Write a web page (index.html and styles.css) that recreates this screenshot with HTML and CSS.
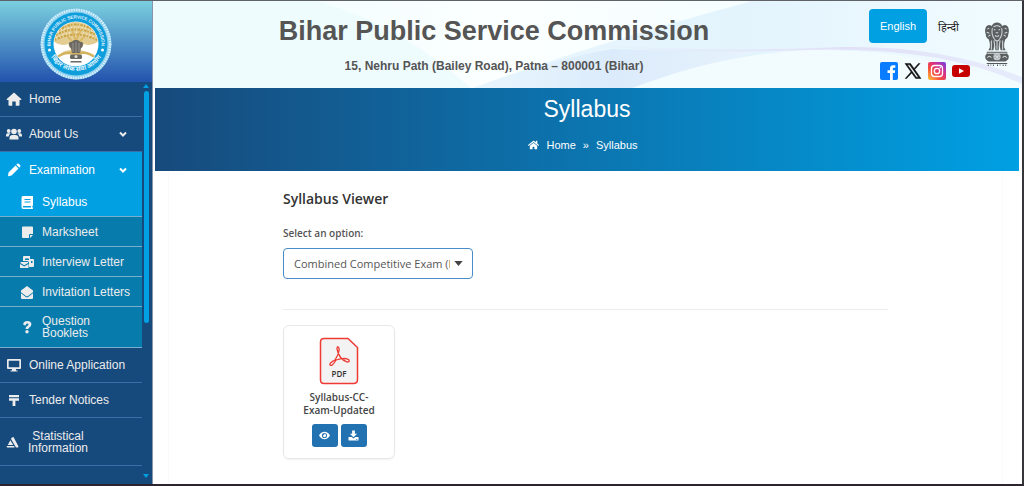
FILE: index.html
```html
<!DOCTYPE html>
<html lang="en">
<head>
    <meta charset="UTF-8">
    <meta name="viewport" content="width=device-width, initial-scale=1.0">
    <title>Syllabus - Bihar Public Service Commission</title>
    <link rel="stylesheet" href="styles.css">
</head>
<body>
    <aside class="sidebar">
        <div class="logo">
            <svg class="seal" viewBox="0 0 144 144" role="img" aria-label="Bihar Public Service Commission">
                <defs>
                    <path id="arcTop" d="M22 82 A51 51 0 1 1 122 82"/>
                    <path id="arcBottom" d="M14 78 A59 59 0 0 0 130 78"/>
                    <clipPath id="disc"><circle cx="72" cy="72" r="44"/></clipPath>
                </defs>
                <circle cx="72" cy="72" r="71" fill="#8fd0ee"/>
                <circle cx="72" cy="72" r="68" fill="none" stroke="#d5effa" stroke-width="5" stroke-dasharray="3 2"/>
                <circle cx="72" cy="72" r="63" fill="#0e9edc"/>
                <circle cx="72" cy="72" r="45" fill="#fff"/>
                <g clip-path="url(#disc)">
                    <path d="M26 20H118V66Q102 78 88 72L80 84Q100 88 112 96L106 92Q88 90 78 94L66 94Q50 90 36 96Q46 84 62 84L56 72Q40 78 26 66Z" fill="#e3cd92"/>
                    <g fill="none" stroke="#c9a343" stroke-width="4" stroke-dasharray="3 3 5 2">
                        <path d="M38 44Q72 22 106 44"/>
                        <path d="M32 54Q72 32 112 54"/>
                        <path d="M30 64Q72 42 114 64"/>
                        <path d="M44 34Q72 18 100 34"/>
                    </g>
                    <g fill="none" stroke="#fffbe8" stroke-width="2" stroke-dasharray="2 5">
                        <path d="M36 49Q72 27 108 49"/>
                        <path d="M32 60Q72 37 112 60"/>
                    </g>
                    <path d="M72 92V62M72 74L54 56M72 74L90 56M72 66L64 44M72 66L82 44" fill="none" stroke="#d9b35a" stroke-width="3"/>
                    <path d="M30 102Q50 84 72 92Q94 84 114 102" fill="none" stroke="#d2b35f" stroke-width="5"/>
                </g>
                <g fill="#6b6762">
                    <path d="M58 72Q58 66 64 68Q66 63 72 64Q78 63 80 68Q86 66 86 72Q86 78 82 80L80 90H64L62 80Q58 78 58 72Z"/>
                    <rect x="60" y="93" width="24" height="9" rx="3"/>
                    <rect x="61" y="106" width="22" height="3"/>
                </g>
                <path d="M66 70V88M72 68V90M78 70V88" stroke="#aaa69e" stroke-width="1.500"/>
                <circle cx="72" cy="97" r="3" fill="#ddd"/>
                <circle cx="19" cy="84" r="3" fill="#fff"/>
                <circle cx="125" cy="84" r="3" fill="#fff"/>
                <text class="seal-text"><textPath href="#arcTop" startOffset="50%" text-anchor="middle">BIHAR PUBLIC SERVICE COMMISSION</textPath></text>
                <text class="seal-text seal-hindi"><textPath href="#arcBottom" startOffset="50%" text-anchor="middle">बिहार लोक सेवा आयोग</textPath></text>
            </svg>
        </div>
        <div class="menu-area">
            <nav class="menu">
                <a class="item" href="#">
                    <svg class="icon" viewBox="0 0 16 16"><path d="M8 1.500L.8 8q-.5.8.3 1H2.500V14q0 .8.8.8H6.300V10.500h3.400v4.300h3q.8 0 .8-.8V9h1.400q.8-.2.300-1Z"/></svg>
                    <span class="label">Home</span>
                </a>
                <a class="item" href="#">
                    <svg class="icon" viewBox="0 0 16 16"><circle cx="8" cy="5.500" r="2.800"/><circle cx="2.700" cy="5" r="1.900"/><circle cx="13.300" cy="5" r="1.900"/><path d="M3.500 13.500V12q0-3 3-3h3q3 0 3 3v1.500ZM0 10.500V9q0-1.700 1.700-1.700h2q.5 0 .9.300Q2.800 8.800 2.700 10.500ZM16 10.500V9q0-1.700-1.700-1.700h-2q-.5 0-.9.300 1.800 1.200 1.900 2.900Z"/></svg>
                    <span class="label">About Us</span>
                    <svg class="chevron" viewBox="0 0 8 6"><path d="M1 1.500L4 4.500L7 1.500"/></svg>
                </a>
                <a class="item open" href="#">
                    <svg class="icon" viewBox="0 0 16 16"><path d="M2.500 10.500L9.500 3.500L12.500 6.500L5.500 13.500L2 14.300ZM10.300 2.700L11.500 1.600Q12.200 1.200 12.800 1.800L14.300 3.300Q14.800 4 14.300 4.600L13.300 5.700Z"/></svg>
                    <span class="label">Examination</span>
                    <svg class="chevron" viewBox="0 0 8 6"><path d="M1 1.500L4 4.500L7 1.500"/></svg>
                </a>
                <div class="submenu">
                    <a class="subitem current" href="#">
                        <svg class="icon" viewBox="0 0 16 16"><path fill-rule="evenodd" d="M4 2H14V11.500L13.300 12V13.500H14V15H4Q2.500 15 2.500 13V4Q2.500 2 4 2ZM5.500 5V6H11.500V5ZM5.500 7.500V8.500H11.500V7.500ZM4.500 12Q3.800 12.100 3.800 12.800T4.500 13.500H12V12Z"/></svg>
                        <span class="label">Syllabus</span>
                    </a>
                    <a class="subitem" href="#">
                        <svg class="icon" viewBox="0 0 16 16"><path d="M3 3.500Q3 2.500 4 2.500H13Q14 2.500 14 3.500V10H11Q10 10 10 11V14H4Q3 14 3 13ZM11 11H14L11 14Z"/></svg>
                        <span class="label">Marksheet</span>
                    </a>
                    <a class="subitem" href="#">
                        <svg class="icon" viewBox="0 0 16 16"><path fill-rule="evenodd" d="M5 2H11V5H14Q15 5 15 6V12Q15 13 14 13H10V9Q10 7 8 7H6V6H10V4.500H6V7H4V3Q4 2 5 2ZM12 7V9H13.500V7ZM1.500 8H9V9L5.200 11.300L1.500 9ZM1 10L5.200 12.600L9.500 10V14H1Z"/></svg>
                        <span class="label">Interview Letter</span>
                    </a>
                    <a class="subitem" href="#">
                        <svg class="icon" viewBox="0 0 16 16"><path d="M2 6.500L8 2L14 6.500V8.300L9 12Q8 12.700 7 12L2 8.300ZM2 9.300L6.500 12.700Q8 13.700 9.500 12.700L14 9.300V14Q14 15 13 15H3Q2 15 2 14Z"/></svg>
                        <span class="label">Invitation Letters</span>
                    </a>
                    <a class="subitem tall" href="#">
                        <svg class="icon" viewBox="0 0 16 16"><path d="M4 5.200Q5 2 8.400 2Q12.400 2 12.400 5.500Q12.400 7.500 10 8.700Q9.400 9 9.400 10H6.600Q6.500 8 8 7.200Q9.500 6.400 9.500 5.600Q9.500 4.600 8.300 4.600Q7 4.600 6.300 6.700Z"/><circle cx="8" cy="12.800" r="1.700"/></svg>
                        <span class="label">Question Booklets</span>
                    </a>
                </div>
                <a class="item" href="#">
                    <svg class="icon" viewBox="0 0 16 16"><path fill-rule="evenodd" d="M2 2H14Q15 2 15 3V11Q15 12 14 12H10V13.500H11.500V14.500H4.500V13.500H6V12H2Q1 12 1 11V3Q1 2 2 2ZM2.700 3.700V10.300H13.300V3.700Z"/></svg>
                    <span class="label">Online Application</span>
                </a>
                <a class="item" href="#">
                    <svg class="icon" viewBox="0 0 16 16"><path d="M3 3H13V5.200H3ZM3 6.300H13V8.700H9.400V14H6.600V8.700H3Z"/></svg>
                    <span class="label">Tender Notices</span>
                </a>
                <a class="item two-line" href="#">
                    <svg class="icon" viewBox="0 0 16 16"><path d="M5.800 3.500L7.500 3L12.500 12.500Q12.500 13.500 11.500 13.500H10L5 5ZM4.300 6.300L7.300 11H1.800ZM.8 12H8L8.700 13.500H1.300Q.4 13.300.8 12Z"/></svg>
                    <span class="label">Statistical Information</span>
                </a>
            </nav>
            <div class="scrollbar" aria-hidden="true">
                <svg viewBox="0 0 6 4"><path d="M3 0L6 4H0Z"/></svg>
                <div class="track"><div class="thumb"></div></div>
                <svg viewBox="0 0 6 4"><path d="M3 4L6 0H0Z"/></svg>
            </div>
        </div>
    </aside>

    <div class="page">
        <header class="header">
            <svg class="waves" viewBox="0 0 870 87" preserveAspectRatio="none" aria-hidden="true">
                <defs>
                    <linearGradient id="w1" x1="0" x2="1" y1="0" y2="0"><stop offset="0" stop-color="#f0fcfe"/><stop offset=".4" stop-color="#fbffff"/><stop offset="1" stop-color="#f0fcfe"/></linearGradient>
                    <linearGradient id="w2" x1="0" x2="1" y1="0" y2="0"><stop offset="0" stop-color="#e9f6fe"/><stop offset=".5" stop-color="#e3f4fd"/><stop offset="1" stop-color="#f2fcff"/></linearGradient>
                    <linearGradient id="w3" x1="0" x2="1" y1="0" y2="0"><stop offset="0" stop-color="#dfeefc" stop-opacity="0"/><stop offset=".5" stop-color="#dcebfb"/><stop offset="1" stop-color="#e6f3fd"/></linearGradient>
                    <linearGradient id="w4" x1="0" x2="1" y1="0" y2="0"><stop offset="0" stop-color="#e2e2f8" stop-opacity="0"/><stop offset=".6" stop-color="#e2e0f8"/><stop offset="1" stop-color="#e6ecfb"/></linearGradient>
                </defs>
                <rect width="870" height="87" fill="url(#w1)"/>
                <path d="M0 0H165Q250 25 318 87H0Z" fill="#effcfe"/>
                <path d="M320 87Q450 40 600 0H870V87Z" fill="url(#w2)"/>
                <path d="M320 87Q400 58 460 48Q520 50 600 51Q530 72 480 87Z" fill="url(#w3)"/>
                <path d="M480 87Q570 52 660 49Q780 49 870 87Z" fill="#f2fcff"/>
                <path d="M430 43Q520 54 650 49Q790 45 870 83V76Q790 44 690 46Q560 52 430 43Z" fill="url(#w4)"/>
            </svg>
            <div class="heading">
                <h1>Bihar Public Service Commission</h1>
                <p>15, Nehru Path (Bailey Road), Patna – 800001 (Bihar)</p>
            </div>
            <div class="links">
                <div class="languages">
                    <button class="lang active" type="button">English</button>
                    <button class="lang" type="button" lang="hi">हिन्दी</button>
                </div>
                <div class="social">
                    <a href="#" aria-label="Facebook"><svg viewBox="0 0 18 18"><rect width="18" height="18" rx="2" fill="#0a7cff"/><path d="M10 18V11H7.500V8.300H10V6.500Q10 3.300 13.200 3.300H15.300V5.800H14Q12.800 5.800 12.800 7V8.300H15.200L14.800 11H12.800V18Z" fill="#fff"/></svg></a>
                    <a href="#" aria-label="X"><svg viewBox="0 0 18 18"><path fill-rule="evenodd" d="M1 1.500H6.500L10.100 6.500L14.500 1.500H16L10.800 7.500L17 16.500H11.700L7.700 10.900L2.700 16.500H1.200L7 9.900ZM3.400 2.800L12.400 15.200H14.500L5.600 2.800Z" fill="#111" stroke="#111" stroke-width=".5"/></svg></a>
                    <a href="#" aria-label="Instagram"><svg viewBox="0 0 18 18"><defs><linearGradient id="ig" x1="0" y1="1" x2="1" y2="0"><stop offset="0" stop-color="#ffc940"/><stop offset=".35" stop-color="#fa5039"/><stop offset=".65" stop-color="#d62d8c"/><stop offset="1" stop-color="#6b45e8"/></linearGradient></defs><rect width="18" height="18" rx="2" fill="url(#ig)"/><rect x="3.500" y="3.500" width="11" height="11" rx="3" fill="none" stroke="#fff" stroke-width="1.300"/><circle cx="9" cy="9" r="2.700" fill="none" stroke="#fff" stroke-width="1.300"/><circle cx="12.200" cy="5.800" r=".8" fill="#fff"/></svg></a>
                    <a href="#" aria-label="YouTube"><svg viewBox="0 0 18 18"><rect y="3" width="18" height="12" rx="3" fill="#c60000"/><path d="M7 6.200L12 9L7 11.800Z" fill="#fff"/></svg></a>
                </div>
            </div>
            <svg class="emblem" viewBox="0 0 50 86" role="img" aria-label="National Emblem of India">
                <g fill="#5c5f60">
                    <path d="M15 8Q17 1 25 1Q33 1 35 8Q42 3 46 9Q50 16 47 24Q47 31 41 34L39 42V50L42 55H32L30 44L28 55H22L20 44L18 55H8L11 50V42L9 34Q3 31 3 24Q0 16 4 9Q8 3 15 8Z"/>
                    <path d="M5 58H45V62L48 66Q49 74 41 77H9Q1 74 2 66L5 62Z"/>
                </g>
                <g fill="none" stroke="#d3dadd" stroke-width="2">
                    <path d="M18 10Q25 5 32 10M19 15H22M28 15H31M23 20Q25 23 27 20M16 12Q13 24 20 33M34 12Q37 24 30 33M21 26Q25 30 29 26M20 34Q25 40 30 34"/>
                    <path d="M6 14L10 12M5 20L10 22M8 28L12 25M44 14L40 12M45 20L40 22M42 28L38 25M14 36V54M36 36V54M25 36V54M19 36L21 50M31 36L29 50"/>
                    <circle cx="25" cy="68" r="6"/>
                    <path d="M25 62V74M19 68H31M21 64L29 72M29 64L21 72M6 70Q10 64 14 70M36 70Q40 64 44 70M6 61H44"/>
                </g>
                <path d="M5 81H45M8 83V86M13 83V85M18 83V86M26 83V86M31 83V85M37 83V86M42 83V86" stroke="#55585a" stroke-width="2"/>
            </svg>
        </header>

        <main class="main">
            <section class="banner">
                <h2>Syllabus</h2>
                <div class="breadcrumb">
                    <svg viewBox="0 0 576 512"><path d="M280.370 148.260L96 300.110V464a16 16 0 0 0 16 16l112.060-.290a16 16 0 0 0 15.920-16V368a16 16 0 0 1 16-16h64a16 16 0 0 1 16 16v95.640a16 16 0 0 0 16 16.050L464 480a16 16 0 0 0 16-16V300L295.670 148.260a12.190 12.190 0 0 0-15.300 0zM571.600 251.470L488 182.560V44.050a12 12 0 0 0-12-12h-56a12 12 0 0 0-12 12v72.610L318.470 43a48 48 0 0 0-61 0L4.340 251.470a12 12 0 0 0-1.600 16.900l25.500 31A12 12 0 0 0 45.150 301l235.220-193.740a12.190 12.190 0 0 1 15.300 0L530.900 301a12 12 0 0 0 16.900-1.600l25.500-31a12 12 0 0 0-1.700-16.930z"/></svg>
                    <a href="#">Home</a>
                    <span>»</span>
                    <span>Syllabus</span>
                </div>
            </section>
            <section class="content">
                <div class="viewer">
                    <h3>Syllabus Viewer</h3>
                    <label for="exam">Select an option:</label>
                    <div class="select-box">
                        <select id="exam">
                            <option>Combined Competitive Exam (Preliminary)</option>
                        </select>
                        <svg class="arrow" viewBox="0 0 10 6"><path d="M0 0H10L5 6Z"/></svg>
                    </div>
                    <hr>
                    <article class="card">
                        <svg class="pdf" viewBox="0 0 40 48">
                            <path d="M5 1.500H29L38.500 10.500V42.500Q38.500 46.500 34.500 46.500H5Q1.500 46.500 1.500 43V5Q1.500 1.500 5 1.500Z" fill="#f3f3f3" stroke="#ee3a32" stroke-width="1.500"/>
                            <path d="M11 28Q10 26 16 23Q21 15 20 11Q18 8 18 12Q20 22 28 25Q31 25 30 23Q27 20 17 23Q13 30 11 28Z" fill="none" stroke="#ee3a32" stroke-width="1.300"/>
                            <text x="20" y="40" text-anchor="middle">PDF</text>
                        </svg>
                        <h4>Syllabus-CC-Exam-Updated</h4>
                        <div class="actions">
                            <button type="button" aria-label="View"><svg viewBox="0 0 12 12"><path fill-rule="evenodd" d="M0 6Q2.200 2 6 2T12 6Q9.800 10 6 10T0 6ZM6 3.200A2.800 2.800 0 1 0 6 8.800A2.800 2.800 0 1 0 6 3.200ZM6 4.200A1.800 1.800 0 1 1 4.200 6Q5.500 6 6 4.200Z"/></svg></button>
                            <button type="button" aria-label="Download"><svg viewBox="0 0 12 12"><path fill-rule="evenodd" d="M4.500.5H7.500V4H10L6 8L2 4H4.500ZM1 7.500H4L6 9.300L8 7.500H11Q11.500 7.500 11.500 8V11Q11.500 11.500 11 11.500H1Q.5 11.500.5 11V8Q.5 7.500 1 7.500ZM8.800 9.800V10.600H10.200V9.800Z"/></svg></button>
                        </div>
                    </article>
                </div>
            </section>
        </main>
    </div>
</body>
</html>
```
FILE: styles.css
```css
* {
    margin: 0;
    padding: 0;
    box-sizing: border-box;
}
body {
    display: flex;
    min-height: 100vh;
    border-top: 1px solid #5f6368;
    border-right: 2px solid #35363a;
    border-bottom: 2px solid #2c2530;
    background: #ffffff;
    font-family: "Liberation Sans", Arial, "Noto Sans", sans-serif;
    font-size: 12px;
}
a {
    color: inherit;
    text-decoration: none;
}
button {
    border: none;
    cursor: pointer;
    font-family: inherit;
}

/* sidebar */
.sidebar {
    display: flex;
    flex-direction: column;
    flex: none;
    width: 153px;
    border-right: 1px solid #8796ae;
    background: #174a7c;
    color: #ececec;
}
.logo {
    display: flex;
    justify-content: center;
    align-items: center;
    height: 81px;
    padding-top: 5px;
    background: linear-gradient(#7bd0df, #2353ae);
}
.seal {
    width: 72px;
    height: 72px;
}
.seal-text {
    fill: #e2f4fc;
    font-size: 9px;
    font-weight: bold;
}
.seal-hindi {
    font-size: 13px;
}
.menu-area {
    display: flex;
    flex: 1;
}
.menu {
    flex: 1;
}
.item, .subitem {
    display: flex;
    align-items: center;
    border-bottom: 1px solid #3c6ea8;
    line-height: 12px;
}
.item {
    gap: 7px;
    height: 35px;
    padding: 0 15px 0 6px;
}
.item .label {
    flex: 1;
}
.item.open {
    border-bottom: none;
}
.item.open, .subitem.current {
    background: #00a0e3;
    color: #ffffff;
}
.item.two-line {
    gap: 4px;
    height: 48px;
}
.item.two-line .label {
    flex: none;
    width: 64px;
    text-align: center;
}
.subitem {
    gap: 7px;
    height: 30px;
    padding-left: 19px;
    border-bottom-color: #76aecb;
    background: #087bad;
}
.subitem.tall {
    height: 41px;
    padding-right: 30px;
}
.icon {
    flex: none;
    width: 16px;
    height: 16px;
    fill: currentColor;
}
.chevron {
    width: 8px;
    height: 6px;
    fill: none;
    stroke: currentColor;
    stroke-width: 2;
}
.scrollbar {
    display: flex;
    flex-direction: column;
    align-items: center;
    gap: 3px;
    width: 10px;
    padding: 2px 3px 6px 1px;
}
.scrollbar svg {
    width: 6px;
    height: 4px;
    fill: #00a0e3;
}
.track {
    flex: 1;
    width: 5px;
}
.thumb {
    height: 61%;
    border-radius: 3px;
    background: #00a0e3;
}

/* header */
.page {
    display: flex;
    flex-direction: column;
    flex: 1;
    min-width: 0;
}
.header {
    position: relative;
    display: flex;
    height: 87px;
    padding-right: 12px;
}
.waves {
    position: absolute;
    inset: 0;
    z-index: -1;
    width: 100%;
    height: 100%;
}
.heading {
    flex: 1;
    padding-top: 14px;
    color: #555555;
    text-align: center;
}
.heading h1 {
    font-size: 27px;
    line-height: 32px;
}
.heading p {
    margin-top: 11px;
    font-size: 12px;
    font-weight: bold;
    line-height: 16px;
}
.links {
    width: 149px;
    padding-top: 8px;
    padding-left: 34px;
}
.languages {
    display: flex;
}
.lang {
    height: 34px;
    padding: 0 11px;
    border-radius: 4px;
    background: transparent;
    color: #222222;
    font-size: 11px;
}
.lang.active {
    background: #00a0e3;
    color: #ffffff;
}
.social {
    display: flex;
    gap: 6px;
    margin-top: 19px;
    padding-left: 11px;
}
.social svg {
    display: block;
    width: 18px;
    height: 18px;
}
.emblem {
    width: 26px;
    height: 44px;
    margin-top: 21px;
}

/* banner */
.main {
    display: flex;
    flex-direction: column;
    flex: 1;
    padding: 0 3px 0 2px;
}
.banner {
    padding: 7px 0 18px;
    background: linear-gradient(90deg, #174a7c, #00a0e3);
    color: #ffffff;
    text-align: center;
}
.banner h2 {
    font-size: 23px;
    font-weight: normal;
    line-height: 28px;
}
.breadcrumb {
    display: flex;
    justify-content: center;
    align-items: center;
    gap: 7px;
    margin-top: 14px;
    padding-right: 8px;
    font-size: 11px;
    line-height: 16px;
}
.breadcrumb svg {
    width: 11px;
    height: 10px;
    fill: currentColor;
}

/* syllabus viewer */
.content {
    flex: 1;
    margin: 0 16px 0 13px;
    border: solid #fafafa;
    border-width: 0 1px;
    color: #333333;
    font-family: "Open Sans", "Noto Sans", sans-serif;
}
.viewer {
    width: 100%;
    max-width: 605px;
    margin: 0 auto;
    padding-top: 18px;
}
.viewer h3 {
    font-size: 14px;
    font-weight: 600;
    line-height: 20px;
}
.viewer label {
    display: block;
    margin-top: 16px;
    color: #555555;
    font-size: 10px;
    font-weight: 600;
    line-height: 16px;
}
.select-box {
    position: relative;
    width: 190px;
    margin-top: 7px;
}
.select-box select {
    width: 100%;
    height: 31px;
    padding: 0 22px 0 10px;
    border: 1px solid #4a8cc7;
    border-radius: 4px;
    background: #ffffff;
    color: #555555;
    font-family: inherit;
    font-size: 11px;
    appearance: none;
}
.arrow {
    position: absolute;
    top: 13px;
    right: 10px;
    width: 9px;
    height: 5px;
    fill: #444444;
    pointer-events: none;
}
.viewer hr {
    margin: 30px 0 15px;
    border: none;
    border-top: 1px solid #ececec;
}
.card {
    display: flex;
    flex-direction: column;
    align-items: center;
    width: 112px;
    padding: 11px 16px;
    border: 1px solid #e8e8e8;
    border-radius: 6px;
    box-shadow: 0 1px 2px rgba(0, 0, 0, 0.06);
    text-align: center;
}
.pdf {
    width: 40px;
    height: 48px;
}
.pdf text {
    fill: #333333;
    font-size: 8px;
    font-weight: 600;
}
.card h4 {
    margin-top: 6px;
    color: #444444;
    font-size: 10px;
    font-weight: 600;
    line-height: 13px;
}
.actions {
    display: flex;
    gap: 3px;
    margin-top: 7px;
}
.actions button {
    display: grid;
    place-items: center;
    width: 26px;
    height: 23px;
    border-radius: 3px;
    background: #2271b1;
}
.actions svg {
    width: 11px;
    height: 11px;
    fill: #ffffff;
}
```
